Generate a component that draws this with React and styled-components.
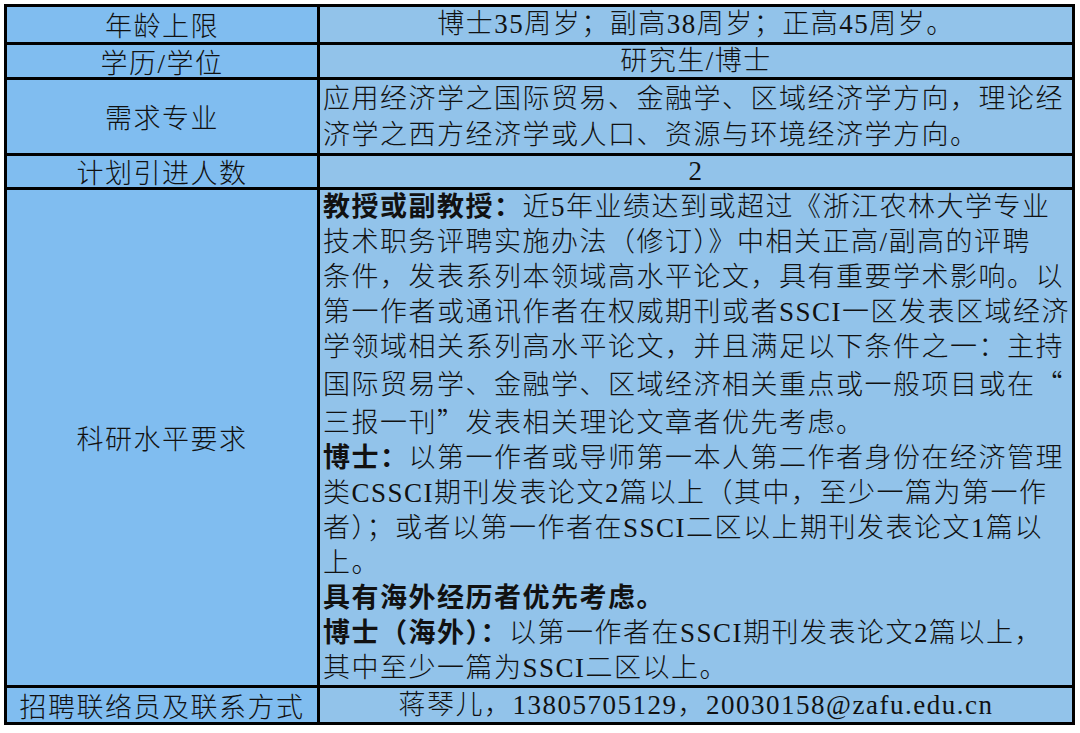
import React from 'react';
import styled, { createGlobalStyle } from 'styled-components';

const GlobalStyle = createGlobalStyle`
  html, body {
    margin: 0;
    padding: 0;
    background: #ffffff;
  }
`;

const Page = styled.div`
  padding: 4px 0 0 4px;
  width: 1080px;
  height: 733px;
  box-sizing: border-box;
  font-family: "Liberation Serif", "Noto Sans CJK SC", serif;
  font-size: 27px;
  letter-spacing: 1.5px;
  color: #111;
`;

const Table = styled.div`
  display: grid;
  grid-template-columns: 310px 752px;
  grid-template-rows: 35px 32px 73px 31px 495px 34px;
  gap: 3px;
  padding: 3px;
  width: max-content;
  background: #000;
`;

const Label = styled.div`
  display: flex;
  align-items: center;
  justify-content: center;
  background: #80bdf0;
  white-space: nowrap;
  font-weight: 300;
`;

const Value = styled.div`
  display: flex;
  flex-direction: column;
  justify-content: center;
  align-items: ${props => (props.$center ? 'center' : 'flex-start')};
  padding-left: ${props => (props.$center ? '0' : '3px')};
  background: #92c3ea;
  line-height: ${props => props.$lh || 35}px;
  font-weight: 300;
`;

const Line = styled.div`
  white-space: nowrap;
`;

const Strong = styled.span`
  font-weight: 700;
`;

// full-width quote marks, as the CJK font draws them
const Quote = styled.span`
  display: inline-block;
  width: 28.5px;
  text-align: ${props => (props.$open ? 'right' : 'left')};
  font-family: "Noto Sans CJK SC", sans-serif;
`;

const rows = [
  { label: '年龄上限', center: true, lines: ['博士35周岁；副高38周岁；正高45周岁。'] },
  { label: '学历/学位', center: true, lines: ['研究生/博士'] },
  {
    label: '需求专业',
    lh: 36,
    lines: [
      '应用经济学之国际贸易、金融学、区域经济学方向，理论经',
      '济学之西方经济学或人口、资源与环境经济学方向。',
    ],
  },
  { label: '计划引进人数', center: true, lines: ['2'] },
  {
    label: '科研水平要求',
    lines: [
      [<Strong key="b">教授或副教授：</Strong>, '近5年业绩达到或超过《浙江农林大学专业'],
      '技术职务评聘实施办法（修订）》中相关正高/副高的评聘',
      '条件，发表系列本领域高水平论文，具有重要学术影响。以',
      '第一作者或通讯作者在权威期刊或者SSCI一区发表区域经济',
      '学领域相关系列高水平论文，并且满足以下条件之一：主持',
      ['国际贸易学、金融学、区域经济相关重点或一般项目或在', <Quote key="q" $open>“</Quote>],
      ['三报一刊', <Quote key="q">”</Quote>, '发表相关理论文章者优先考虑。'],
      [<Strong key="b">博士：</Strong>, '以第一作者或导师第一本人第二作者身份在经济管理'],
      '类CSSCI期刊发表论文2篇以上（其中，至少一篇为第一作',
      '者）；或者以第一作者在SSCI二区以上期刊发表论文1篇以',
      '上。',
      [<Strong key="b">具有海外经历者优先考虑。</Strong>],
      [<Strong key="b">博士（海外）：</Strong>, '以第一作者在SSCI期刊发表论文2篇以上，'],
      '其中至少一篇为SSCI二区以上。',
    ],
  },
  {
    label: '招聘联络员及联系方式',
    center: true,
    lines: ['蒋琴儿，13805705129，20030158@zafu.edu.cn'],
  },
];

const App = () => (
  <Page>
    <GlobalStyle />
    <Table>
      {rows.map(row => (
        <React.Fragment key={row.label}>
          <Label>{row.label}</Label>
          <Value $center={row.center} $lh={row.lh}>
            {row.lines.map((line, i) => (
              <Line key={i}>{line}</Line>
            ))}
          </Value>
        </React.Fragment>
      ))}
    </Table>
  </Page>
);

export default App;
